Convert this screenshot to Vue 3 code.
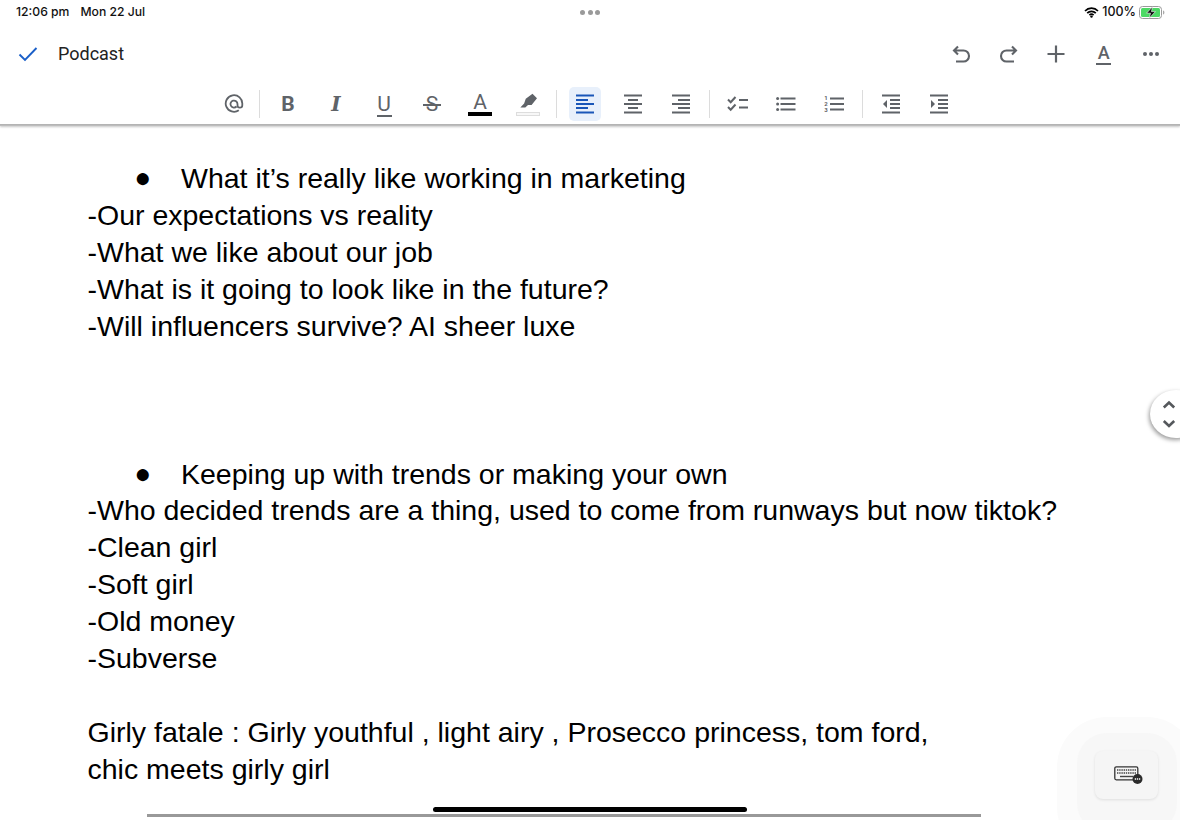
<script setup>
const doc = [
  { b: 'What it’s really like working in marketing' },
  '-Our expectations vs reality',
  '-What we like about our job',
  '-What is it going to look like in the future?',
  '-Will influencers survive? AI sheer luxe',
  '', '', '',
  { b: 'Keeping up with trends or making your own' },
  '-Who decided trends are a thing, used to come from runways but now tiktok?',
  '-Clean girl',
  '-Soft girl',
  '-Old money',
  '-Subverse',
  '',
  'Girly fatale : Girly youthful , light airy , Prosecco princess, tom ford,',
  'chic meets girly girl',
]
</script>

<template>
  <div class="page">
    <header class="chrome">
      <div class="status">
        <div class="clock"><span>12:06 pm</span><span>Mon 22 Jul</span></div>
        <div class="dots"><i></i><i></i><i></i></div>
        <div class="sys">
          <svg width="15" height="11" viewBox="0 0 15 11"><path d="M1 4a9 9 0 0 1 13 0M3.200 6.200a6 6 0 0 1 8.600 0M5.400 8.200a3 3 0 0 1 4.200 0" fill="none" stroke="#000" stroke-width="1.700"/><circle cx="7.500" cy="9.600" r="1.200" fill="#000"/></svg>
          <span>100%</span>
          <svg width="26" height="13" viewBox="0 0 26 13"><rect x=".5" y=".5" width="22" height="12" rx="3" fill="#fff" stroke="#9a9a9a"/><rect x="2" y="2" width="19" height="9" rx="1.500" fill="#4cd964"/><path d="M24 4.500c1 .3 1.400 1 1.400 2s-.4 1.700-1.400 2z" fill="#aaa"/><path d="M13.500 0.800 7.500 7.200h4l-1.300 5 6.300-6.600h-4z" fill="#111" stroke="#fff" stroke-width=".6"/></svg>
        </div>
      </div>

      <div class="titlebar">
        <div class="title">
          <svg class="check" width="20" height="16" viewBox="0 0 20 16"><path d="M1.500 8.500 7 14 18.500 2" fill="none" stroke="#1a5fc8" stroke-width="1.900"/></svg>
          <span>Podcast</span>
        </div>
        <div class="actions">
          <button><svg width="24" height="24" viewBox="0 0 24 24"><path d="M9 4.500 5 8.500l4 4M5.500 8.500h9a5.500 5.500 0 0 1 0 11H7" fill="none" stroke="#5f6368" stroke-width="2.100"/></svg></button>
          <button><svg width="24" height="24" viewBox="0 0 24 24"><path d="M15 4.500l4 4-4 4M18.500 8.500h-9a5.500 5.500 0 0 0 0 11H17" fill="none" stroke="#5f6368" stroke-width="2.100"/></svg></button>
          <button><svg width="24" height="24" viewBox="0 0 24 24"><path d="M12 3.500v17M3.500 12h17" fill="none" stroke="#5f6368" stroke-width="2.200"/></svg></button>
          <button class="stack"><span class="ink">A</span><b class="ink-bar"></b></button>
          <button class="more"><i></i><i></i><i></i></button>
        </div>
      </div>

      <div class="toolbar">
        <button class="first">
          <svg width="20" height="20" viewBox="0 0 20 20"><path d="M14.800 16.300A8.300 8.300 0 1 1 18.300 10v1.200a2.400 2.400 0 0 1-4.800 0V10a3.500 3.500 0 1 0-1 2.500" fill="none" stroke="#5f6368" stroke-width="1.800"/></svg>
        </button>
        <span class="sep"></span>
        <button class="glyph bold">B</button>
        <button class="glyph ital">I</button>
        <button class="stack und"><span>U</span><b></b></button>
        <button class="glyph strike"><span>S</span></button>
        <button class="colour"><span>A</span><b class="blk"></b></button>
        <button class="colour">
          <svg width="24" height="20" viewBox="0 0 24 20"><path d="M9.500 6.500 17 .8l5 5-6 7.500h-4L9 16H3.500l4.200-4.300z" fill="#5f6368"/></svg>
          <b class="pale"></b>
        </button>
        <span class="sep"></span>
        <button class="on">
          <svg width="20" height="20" viewBox="0 0 20 20"><path d="M1 1.500h18M1 6h12M1 10h18M1 14h12M1 18.500h18" stroke="#1a56b8" stroke-width="1.900"/></svg>
        </button>
        <button>
          <svg width="20" height="20" viewBox="0 0 20 20"><path d="M1 1.500h18M5 6h10M1 10h18M5 14h10M1 18.500h18" stroke="#5f6368" stroke-width="1.800"/></svg>
        </button>
        <button>
          <svg width="20" height="20" viewBox="0 0 20 20"><path d="M1 1.500h18M7 6h12M1 10h18M7 14h12M1 18.500h18" stroke="#5f6368" stroke-width="1.800"/></svg>
        </button>
        <span class="sep"></span>
        <button>
          <svg width="22" height="20" viewBox="0 0 22 20"><path d="M1 5.500 3.700 8.200 8.500 3M1 13 3.700 15.700 8.500 10.500M12 6h9M12 13.500h9" fill="none" stroke="#5f6368" stroke-width="2"/></svg>
        </button>
        <button>
          <svg width="20" height="20" viewBox="0 0 20 20"><path d="M4.500 4.500h15M4.500 10h15M4.500 15.500h15" stroke="#5f6368" stroke-width="1.800"/><circle cx="1.600" cy="4.500" r="1.500" fill="#5f6368"/><circle cx="1.600" cy="10" r="1.500" fill="#5f6368"/><circle cx="1.600" cy="15.500" r="1.500" fill="#5f6368"/></svg>
        </button>
        <button class="numbered">
          <span class="nums"><span>1</span><span>2</span><span>3</span></span>
          <svg width="14" height="20" viewBox="0 0 14 20"><path d="M0 4.500h14M0 10h14M0 15.500h14" stroke="#5f6368" stroke-width="1.800"/></svg>
        </button>
        <span class="sep"></span>
        <button>
          <svg width="20" height="20" viewBox="0 0 20 20"><path d="M1 1.500h18M9 6h10M9 10h10M9 14h10M1 18.500h18" stroke="#5f6368" stroke-width="1.800"/><path d="M6 6v8l-4-4z" fill="#5f6368"/></svg>
        </button>
        <button>
          <svg width="20" height="20" viewBox="0 0 20 20"><path d="M1 1.500h18M9 6h10M9 10h10M9 14h10M1 18.500h18" stroke="#5f6368" stroke-width="1.800"/><path d="M2 6v8l4-4z" fill="#5f6368"/></svg>
        </button>
      </div>
    </header>

    <main class="doc">
      <template v-for="(line, i) in doc" :key="i">
        <div v-if="line.b" class="line bullet"><span class="dot">●</span><span>{{ line.b }}</span></div>
        <div v-else class="line">{{ line }}</div>
      </template>
    </main>

    <div class="pager">
      <svg width="14" height="32" viewBox="0 0 14 32"><path d="M1.800 9.500 7 4.500l5.200 5M1.800 23l5.200 5 5.200-5" fill="none" stroke="#55585c" stroke-width="2.600"/></svg>
    </div>

    <div class="halo">
      <div class="ring"></div>
      <div class="kbd">
        <svg width="30" height="20" viewBox="0 0 30 20">
          <rect x=".8" y="1.800" width="23" height="13" rx="1.500" fill="none" stroke="#333" stroke-width="1.300"/>
          <path d="M3 5h19M3 8h19" stroke="#444" stroke-width="1.600" stroke-dasharray="1.400 .8"/>
          <path d="M6 11.500h13" stroke="#444" stroke-width="1.400"/>
          <circle cx="23.500" cy="14" r="5" fill="#2b2b2b"/>
          <path d="M20.800 14h5.400" stroke="#fff" stroke-width="1.300" stroke-dasharray="1.300 .8"/>
        </svg>
      </div>
    </div>

    <div class="rule"></div>
    <div class="home"></div>
  </div>
</template>

<style>
html, body { margin: 0; overflow: hidden; background: #fff; }
</style>

<style scoped>
.page {
  position: relative;
  width: 1180px;
  height: 820px;
  overflow: hidden;
  background: #fff;
  font-family: "Liberation Sans", Arial, sans-serif;
}
button {
  border: 0;
  background: none;
  padding: 0;
  margin: 0;
  display: flex;
  align-items: center;
  justify-content: center;
  font-family: Roboto, sans-serif;
  color: #5f6368;
}
.chrome {
  height: 124px;
  box-sizing: border-box;
  box-shadow: 0 1px 0 #b4b4b4, 0 2px 0 #bdbdbd, 0 3px 2px rgba(0,0,0,.22);
  position: relative;
  z-index: 2;
  background: #fff;
}
.status {
  height: 24px;
  display: grid;
  grid-template-columns: 1fr auto 1fr;
  align-items: center;
  padding: 0 15px 0 16px;
  font: 500 12.500px/24px Inter, sans-serif;
  color: #111;
}
.clock { display: flex; gap: 11px; font-size: 12.200px; }
.dots { display: flex; gap: 2.500px; margin-left: -1px; }
.dots i { width: 5px; height: 5px; border-radius: 50%; background: #9a9a9a; }
.sys { display: flex; justify-content: flex-end; align-items: center; gap: 3px; }
.titlebar {
  height: 60px;
  display: flex;
  align-items: center;
  justify-content: space-between;
}
.title {
  display: flex;
  align-items: center;
  font: 400 18px/1 Roboto, sans-serif;
  color: #222;
}
.check { margin: 0 20px 0 18px; }
.actions { display: flex; padding-right: 5px; }
.actions button { width: 47.500px; height: 40px; }
.stack { flex-direction: column; }
.ink { font: 500 18px/18px Roboto, sans-serif; }
.ink-bar { width: 15px; height: 2px; margin-top: 1px; background: #5f6368; }
.more { gap: 2px; }
.more i { width: 4px; height: 4px; border-radius: 50%; background: #5f6368; }
.toolbar {
  height: 40px;
  display: flex;
  align-items: center;
  padding-left: 213px;
}
.toolbar button { width: 48px; height: 34px; }
.toolbar .first { width: 42px; }
.sep { width: 1px; height: 28px; margin: 0 4px; background: #dcdcdc; }
.glyph { font-size: 21px; line-height: 1; }
.bold { font-weight: 700; }
.ital { font: italic 700 20px "DejaVu Serif", serif; }
.und { font-size: 21px; line-height: 20px; padding-top: 2px; }
.und b { width: 15px; height: 2px; margin-top: 1px; background: #5f6368; }
.strike span { position: relative; display: block; }
.strike span::after {
  content: "";
  position: absolute;
  left: -3px;
  right: -3px;
  top: 10px;
  height: 2px;
  background: #5f6368;
}
.colour { flex-direction: column; font-size: 21px; line-height: 18px; }
.colour span { height: 19px; }
.colour svg { height: 18px; margin-bottom: 1px; }
.blk { width: 24px; height: 4px; background: #000; }
.pale { width: 24px; height: 4px; box-sizing: border-box; border: 1px solid #ddd; background: #f7f7f7; }
.toolbar .on { width: 32px; margin: 0 8px; background: #e8f0fb; border-radius: 5px; }
.numbered { gap: 2px; }
.nums {
  display: flex;
  flex-direction: column;
  font: 700 6px/6px Roboto, sans-serif;
  color: #5f6368;
}

.doc {
  padding: 36px 0 0 87.500px;
  font-size: 28.500px;
  line-height: 36.950px;
  color: #000;
  white-space: nowrap;
}
.line { height: 36.950px; }
.bullet { display: flex; padding-left: 47px; }
.dot { width: 46.500px; font-size: 28px; }

.pager {
  position: absolute;
  right: -22px;
  top: 390px;
  width: 52px;
  height: 48px;
  border-radius: 50%;
  background: #fff;
  box-shadow: -1px 2px 4px rgba(0,0,0,.4);
  display: flex;
  align-items: center;
  padding-left: 12px;
  box-sizing: border-box;
}
.halo {
  position: absolute;
  left: 1057px;
  top: 717px;
  width: 140px;
  height: 140px;
  border-radius: 50px;
  background: #fbfbfb;
}
.ring {
  position: absolute;
  left: 20px;
  top: 16px;
  width: 100px;
  height: 100px;
  border-radius: 30px;
  background: #f7f7f7;
}
.kbd {
  position: absolute;
  left: 38px;
  top: 34px;
  width: 63px;
  height: 48px;
  padding-left: 4px;
  box-sizing: border-box;
  border-radius: 8px;
  background: #f5f5f5;
  box-shadow: 0 1px 3px rgba(0,0,0,.1);
  display: flex;
  align-items: center;
  justify-content: center;
}
.rule {
  position: absolute;
  left: 147px;
  width: 834px;
  bottom: 3px;
  height: 3px;
  background: #999;
}
.home {
  position: absolute;
  left: 433px;
  width: 314px;
  top: 807px;
  height: 5px;
  border-radius: 3px;
  background: #000;
}
</style>
